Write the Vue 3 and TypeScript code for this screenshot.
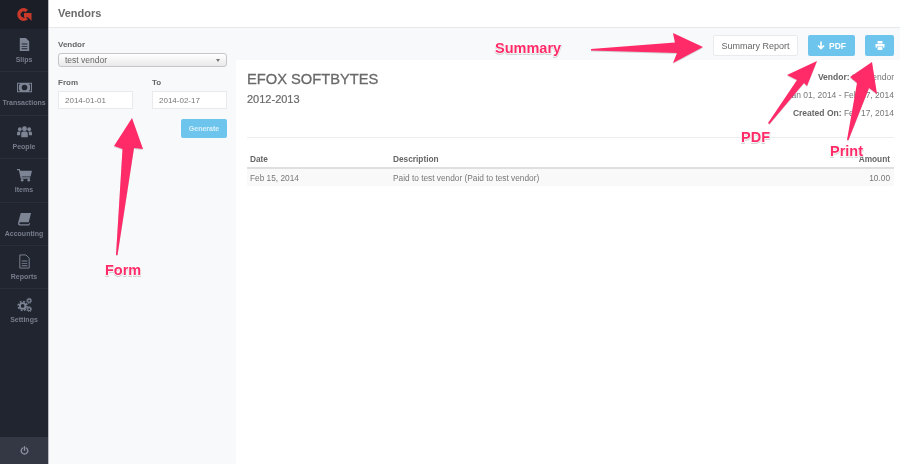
<template>
  <div class="app">
    <aside class="sidebar">
      <div class="logo">
        <svg width="16" height="13" viewBox="0 0 16 13">
          <path d="M10.800 3A4.700 4.700 0 1 0 10.800 10" fill="none" stroke="#c8392b" stroke-width="3.400" />
          <path d="M8 5H15.500V12.800L12 9.200L8 9Z" fill="#c8392b" />
        </svg>
      </div>
      <nav class="nav">
        <a v-for="item in navItems" :key="item.label" class="nav-item">
          <svg class="nav-icon" viewBox="0 0 16 16" fill="#7d8494" v-html="item.icon"></svg>
          <span>{{ item.label }}</span>
        </a>
      </nav>
      <div class="power">
        <svg width="9" height="9" viewBox="0 0 12 12" fill="none" stroke="#8b91a0" stroke-width="1.800" stroke-linecap="round">
          <path d="M3.600 2.600A4.400 4.400 0 1 0 8.400 2.600" />
          <path d="M6 1V5.600" />
        </svg>
      </div>
    </aside>

    <div class="content">
      <header class="topbar">Vendors</header>
      <div class="panels">
        <section class="filters">
          <label class="field-label">Vendor</label>
          <div class="select">
            <span>test vendor</span>
            <i class="caret"></i>
          </div>
          <div class="dates">
            <div>
              <label class="field-label">From</label>
              <div class="input">2014-01-01</div>
            </div>
            <div>
              <label class="field-label">To</label>
              <div class="input">2014-02-17</div>
            </div>
          </div>
          <div class="form-actions">
            <button class="btn-blue generate">Generate</button>
          </div>
        </section>

        <main class="report">
          <div class="toolbar">
            <button class="btn-white">Summary Report</button>
            <button class="btn-blue pdf">
              <svg width="8" height="9" viewBox="0 0 8 9" fill="none" stroke="#fff" stroke-width="1.600">
                <path d="M4 0.500V7.500M1 4.500L4 7.500L7 4.500" />
              </svg>
              PDF
            </button>
            <button class="btn-blue print">
              <svg width="10" height="9" viewBox="0 0 10 9" fill="#fff">
                <path d="M2.500 0H7.500V2.500H2.500ZM0.500 3H9.500V6.500H8V5H2V6.500H0.500ZM2.600 5.600H7.400V9H2.600Z" />
              </svg>
            </button>
          </div>
          <div class="sheet">
            <div class="sheet-head">
              <div>
                <h1>EFOX SOFTBYTES</h1>
                <h2>2012-2013</h2>
              </div>
              <div class="meta">
                <p><b>Vendor:</b> test vendor</p>
                <p>Jan 01, 2014 - Feb 17, 2014</p>
                <p><b>Created On:</b> Feb 17, 2014</p>
              </div>
            </div>
            <table>
              <thead>
                <tr>
                  <th class="col-date">Date</th>
                  <th>Description</th>
                  <th class="num">Amount</th>
                </tr>
              </thead>
              <tbody>
                <tr v-for="row in rows" :key="row.date">
                  <td>{{ row.date }}</td>
                  <td>{{ row.description }}</td>
                  <td class="num">{{ row.amount }}</td>
                </tr>
              </tbody>
            </table>
          </div>
        </main>
      </div>
    </div>

    <!-- screenshot annotations -->
    <svg class="notes" width="900" height="464" viewBox="0 0 900 464">
      <g class="arrows" fill="#ff2a68">
        <polygon points="116,255 122.500,149 114,146 132,118 143,149 134,148 117.500,255" />
        <polygon points="591,49 675,42.500 673,33 703,47 673,63 677,53 591,50.500" />
        <polygon points="768,123 797,80 787,75 817,61 807,86 804,83 769.500,124" />
        <polygon points="847,140 857,83 850,77 872,62 877,94 869,88 848.500,140" />
      </g>
      <g class="labels">
        <text x="495" y="53">Summary</text>
        <text x="105" y="275">Form</text>
        <text x="741" y="142">PDF</text>
        <text x="830" y="156">Print</text>
      </g>
    </svg>
  </div>
</template>

<script setup lang="ts">
interface NavItem {
  label: string
  icon: string
}

const navItems: NavItem[] = [
  { label: 'Slips', icon: '<path d="M3 1H9.500L13 4.500V15H3ZM5 7V8H11V7ZM5 9.500V10.500H11V9.500ZM5 12V13H11V12Z" fill-rule="evenodd"/>' },
  { label: 'Transactions', icon: '<path d="M0 3H16V13H0ZM1 4V12H3V11H2V5H3V4ZM13 4V5H14V11H13V12H15V4ZM8 5A3 3 0 1 0 8 11A3 3 0 1 0 8 5Z" fill-rule="evenodd"/>' },
  { label: 'People', icon: '<circle cx="8" cy="5" r="2.600"/><circle cx="3" cy="5.500" r="2"/><circle cx="13" cy="5.500" r="2"/><path d="M4.500 14V10Q4.500 8 6.500 8H9.500Q11.500 8 11.500 10V14ZM0 12V9.500Q0 8 2 8H3.800Q3.400 8.800 3.400 10V12ZM16 12V9.500Q16 8 14 8H12.200Q12.600 8.800 12.600 10V12Z"/>' },
  { label: 'Items', icon: '<path d="M0 2H3L3.500 4H16L14.500 10H5L5.300 11H14V12.500H4L2 3.500H0Z"/><circle cx="5.500" cy="14" r="1.400"/><circle cx="12.500" cy="14" r="1.400"/>' },
  { label: 'Accounting', icon: '<path d="M4 2H15L12.500 12H3.500Q2.500 12 2.500 13T3.500 14H12.500L13 12.800L14 13L13 15.500H3Q0.800 15.500 1 13Z"/>' },
  { label: 'Reports', icon: '<path d="M3 1H9.500L13 4.500V15H3Z" fill="none" stroke="#7d8494"/><path d="M5 7H11V8H5ZM5 9.500H11V10.500H5ZM5 12H11V13H5Z"/>' },
  { label: 'Settings', icon: '<g fill="none" stroke="#7d8494"><circle cx="6" cy="9.500" r="3" stroke-width="2"/><circle cx="6" cy="9.500" r="4.800" stroke-width="1.600" stroke-dasharray="2 1.770"/><circle cx="13" cy="4" r="1.700" stroke-width="1.200"/><circle cx="13" cy="4" r="2.700" stroke-width="1" stroke-dasharray="1.200 0.920"/><circle cx="13" cy="13" r="1.700" stroke-width="1.200"/><circle cx="13" cy="13" r="2.700" stroke-width="1" stroke-dasharray="1.200 0.920"/></g>' },
]

const rows = [
  {
    date: 'Feb 15, 2014',
    description: 'Paid to test vendor (Paid to test vendor)',
    amount: '10.00',
  },
]
</script>

<style>
html,
body {
  margin: 0;
  background: #fff;
}
</style>

<style scoped>
.app {
  position: relative;
  display: flex;
  width: 900px;
  height: 464px;
  overflow: hidden;
  font-family: "Liberation Sans", Arial, sans-serif;
  color: #666;
  filter: blur(0.3px);
}

.sidebar {
  display: flex;
  flex-direction: column;
  width: 49px;
  box-sizing: border-box;
  flex: none;
  background: #212530;
  border-right: 1px solid #b9bcc2;
}

.logo {
  display: flex;
  align-items: center;
  justify-content: center;
  height: 29px;
  background: #1b1e26;
}

.nav {
  flex: 1;
}

.nav-item {
  display: flex;
  flex-direction: column;
  align-items: center;
  height: 43.400px;
  padding-top: 8px;
  box-sizing: border-box;
  border-bottom: 1px solid #2a2e3a;
  font-size: 7px;
  font-weight: bold;
  color: #777d8c;
}

.nav-item:last-child {
  border-bottom: 0;
}

.nav-icon {
  width: 15px;
  height: 15px;
  margin-bottom: 4px;
}

.power {
  display: flex;
  align-items: center;
  justify-content: center;
  height: 27px;
  background: #343844;
}

.content {
  display: flex;
  flex-direction: column;
  flex: 1;
  min-width: 0;
}

.topbar {
  height: 28px;
  padding-left: 9px;
  box-sizing: border-box;
  border-bottom: 1px solid #e6e8ec;
  font-size: 11px;
  line-height: 26px;
  font-weight: bold;
  color: #6b6b6b;
  background: #fff;
}

.panels {
  display: flex;
  flex: 1;
  background: #f7f9fb;
}

.filters {
  width: 187px;
  flex: none;
  padding: 12px 9px 0;
  box-sizing: border-box;
}

.field-label {
  display: block;
  height: 13px;
  font-size: 8px;
  line-height: 9px;
  font-weight: bold;
  color: #666;
}

.select {
  display: flex;
  align-items: center;
  justify-content: space-between;
  height: 14px;
  padding: 0 6px;
  box-sizing: border-box;
  border: 1px solid #c4c6c9;
  border-radius: 3px;
  background: linear-gradient(#fff, #e9e9ea);
  font-size: 8.500px;
  color: #666;
}

.caret {
  border-left: 2.500px solid transparent;
  border-right: 2.500px solid transparent;
  border-top: 3px solid #777;
}

.dates {
  display: flex;
  justify-content: space-between;
  margin-top: 11px;
}

.input {
  width: 75px;
  height: 18px;
  padding-left: 6px;
  box-sizing: border-box;
  border: 1px solid #e8eaed;
  background: #fff;
  font-size: 8px;
  line-height: 17px;
  color: #777;
}

.form-actions {
  display: flex;
  justify-content: flex-end;
  margin-top: 10px;
}

.btn-blue {
  border: 0;
  border-radius: 2px;
  background: #6dc5ee;
  color: #fff;
  font-family: inherit;
  font-weight: bold;
  padding: 0;
}

.generate {
  width: 46px;
  height: 19px;
  font-size: 7px;
  color: #d9f0fb;
}

.report {
  display: flex;
  flex-direction: column;
  flex: 1;
  min-width: 0;
}

.toolbar {
  display: flex;
  justify-content: flex-end;
  align-items: flex-start;
  gap: 10px;
  height: 32px;
  padding: 7px 6px 0 0;
  box-sizing: border-box;
}

.btn-white {
  width: 85px;
  height: 21px;
  padding: 0;
  border: 1px solid #e8eaed;
  border-radius: 2px;
  background: #fff;
  font-family: inherit;
  font-size: 9px;
  color: #666;
}

.pdf {
  display: flex;
  align-items: center;
  justify-content: center;
  gap: 4px;
  width: 47px;
  height: 21px;
  font-size: 8.500px;
}

.print {
  display: flex;
  align-items: center;
  justify-content: center;
  width: 29px;
  height: 21px;
}

.sheet {
  flex: 1;
  padding: 11px 6px 0 11px;
  background: #fff;
}

.sheet-head {
  display: flex;
  justify-content: space-between;
  height: 66px;
  border-bottom: 1px solid #eceef0;
}

h1 {
  margin: 0;
  font-size: 14.700px;
  line-height: 16px;
  font-weight: normal;
  color: #6a6a6a;
  -webkit-text-stroke: 0.3px #6a6a6a;
}

h2 {
  margin: 6px 0 0;
  font-size: 11px;
  line-height: 13px;
  font-weight: normal;
  color: #6a6a6a;
  -webkit-text-stroke: 0.2px #6a6a6a;
}

.meta {
  padding-top: 1px;
  text-align: right;
  font-size: 8.500px;
  color: #777;
}

.meta p {
  margin: 0 0 8px;
  line-height: 10px;
}

.meta b {
  color: #666;
}

table {
  width: 100%;
  margin-top: 12px;
  border-collapse: collapse;
  font-size: 8.300px;
}

th {
  height: 17px;
  padding: 0;
  border-bottom: 2px solid #dddfe1;
  text-align: left;
  color: #666;
}

.col-date {
  width: 143px;
  padding-left: 3px;
}

td {
  height: 17px;
  padding: 0;
  background: #f9f9f9;
  color: #777;
}

td:first-child {
  padding-left: 3px;
}

.num {
  padding-right: 4px;
  text-align: right;
}

.notes {
  position: absolute;
  left: 0;
  top: 0;
  pointer-events: none;
}

.arrows {
  filter: drop-shadow(0 1px 0.500px rgba(0, 0, 0, 0.15));
}

.labels {
  filter: drop-shadow(0 1px 0.500px rgba(0, 0, 0, 0.2));
}

.labels text {
  font-family: "Liberation Sans", Arial, sans-serif;
  font-size: 14.500px;
  font-weight: bold;
  fill: #ff2a68;
  paint-order: stroke;
  stroke: #fff;
  stroke-width: 1.500px;
}
</style>
